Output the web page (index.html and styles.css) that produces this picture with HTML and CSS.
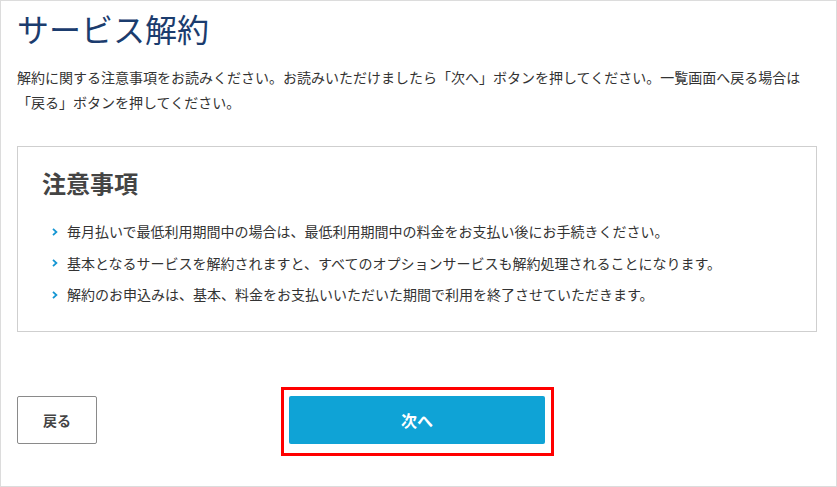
FILE: index.html
```html
<!DOCTYPE html>
<html lang="ja">
<head>
<meta charset="utf-8">
<title>サービス解約</title>
<link rel="stylesheet" href="styles.css">
</head>
<body>
<div class="page">
  <h1 class="title">サービス解約</h1>
  <p class="lead">解約に関する注意事項をお読みください。お読みいただけましたら「次へ」ボタンを押してください。一覧画面へ戻る場合は<br>「戻る」ボタンを押してください。</p>
  <section class="notice">
    <h2 class="notice-title">注意事項</h2>
    <ul class="notice-list">
      <li class="notice-item"><svg class="chev" width="6" height="8" viewBox="0 0 6 8"><polyline points="1,0.8 4.4,4 1,7.2" fill="none" stroke="#1596d3" stroke-width="1.8"/></svg><span>毎月払いで最低利用期間中の場合は、最低利用期間中の料金をお支払い後にお手続きください。</span></li>
      <li class="notice-item"><svg class="chev" width="6" height="8" viewBox="0 0 6 8"><polyline points="1,0.8 4.4,4 1,7.2" fill="none" stroke="#1596d3" stroke-width="1.8"/></svg><span>基本となるサービスを解約されますと、すべてのオプションサービスも解約処理されることになります。</span></li>
      <li class="notice-item"><svg class="chev" width="6" height="8" viewBox="0 0 6 8"><polyline points="1,0.8 4.4,4 1,7.2" fill="none" stroke="#1596d3" stroke-width="1.8"/></svg><span>解約のお申込みは、基本、料金をお支払いいただいた期間で利用を終了させていただきます。</span></li>
    </ul>
  </section>
  <div class="actions">
    <button class="btn-back" type="button">戻る</button>
    <div class="highlight">
      <button class="btn-next" type="button">次へ</button>
    </div>
  </div>
</div>
</body>
</html>
```

FILE: styles.css
```css
* { box-sizing: border-box; }
html, body { margin: 0; padding: 0; background: #fff; }
body {
  font-family: "Noto Sans CJK JP", "Noto Sans", sans-serif;
  color: #333;
}
.page {
  width: 837px;
  height: 487px;
  border: 1px solid #dcdcdc;
  padding: 0 16px;
  overflow: hidden;
}
.title {
  margin: 7px 0 0;
  font-size: 32px;
  line-height: 40px;
  font-weight: 400;
  color: #1b3c6e;
  letter-spacing: 0;
}
.lead {
  margin: 17px 0 0;
  font-size: 14px;
  line-height: 25px;
  color: #333;
}
.notice {
  margin-top: 31px;
  width: 800px;
  border: 1px solid #cfcfcf;
  padding: 20px 24px 20px 24px;
}
.notice-title {
  margin: 0;
  font-size: 24px;
  line-height: 32px;
  font-weight: 700;
  color: #444;
}
.notice-list {
  list-style: none;
  margin: 17px 0 0;
  padding: 0 0 0 10px;
}
.notice-item {
  display: flex;
  align-items: center;
  gap: 9px;
  font-size: 14px;
  line-height: 31.5px;
  color: #333;
}
.chev { flex: none; }
.actions {
  display: flex;
  align-items: flex-start;
  gap: 184px;
  margin-top: 55px;
}
.btn-back {
  margin-top: 9px;
  width: 80px;
  height: 48px;
  background: #fff;
  border: 1px solid #8a8a8a;
  border-radius: 2px;
  font-family: inherit;
  font-size: 14px;
  font-weight: 700;
  color: #444;
  padding: 0;
}
.highlight {
  border: 3px solid #ff0000;
  padding: 6px 6px 9px 5px;
}
.btn-next {
  display: block;
  width: 256px;
  height: 48px;
  background: #0fa3d6;
  border: none;
  border-radius: 2px;
  font-family: inherit;
  font-size: 16px;
  font-weight: 700;
  color: #fff;
  padding: 0;
}
```
